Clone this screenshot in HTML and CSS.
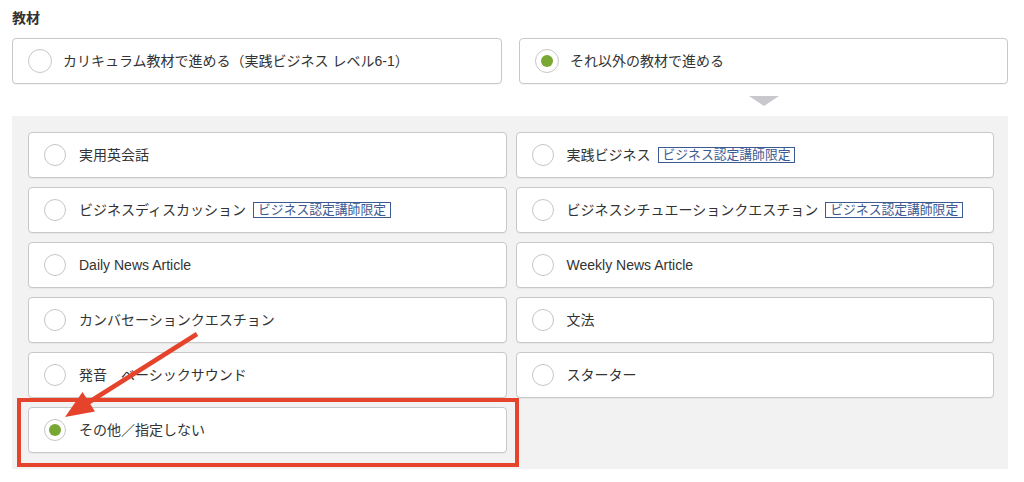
FILE: index.html
```html
<!DOCTYPE html>
<html lang="ja">
<head>
<meta charset="utf-8">
<title>教材</title>
<link rel="stylesheet" href="styles.css">
</head>
<body>
<div class="page">
  <h2 class="label">教材</h2>
  <div class="choice-row">
    <label class="card top"><span class="radio"></span><span class="text">カリキュラム教材で進める（実践ビジネス レベル6-1）</span></label>
    <label class="card top"><span class="radio checked"></span><span class="text">それ以外の教材で進める</span></label>
  </div>
  <div class="pointer-row"><span></span><span class="tri"></span></div>
  <div class="panel">
    <label class="card"><span class="radio"></span><span class="text">実用英会話</span></label>
    <label class="card"><span class="radio"></span><span class="text">実践ビジネス</span><span class="badge">ビジネス認定講師限定</span></label>
    <label class="card"><span class="radio"></span><span class="text">ビジネスディスカッション</span><span class="badge">ビジネス認定講師限定</span></label>
    <label class="card"><span class="radio"></span><span class="text">ビジネスシチュエーションクエスチョン</span><span class="badge">ビジネス認定講師限定</span></label>
    <label class="card"><span class="radio"></span><span class="text">Daily News Article</span></label>
    <label class="card"><span class="radio"></span><span class="text">Weekly News Article</span></label>
    <label class="card"><span class="radio"></span><span class="text">カンバセーションクエスチョン</span></label>
    <label class="card"><span class="radio"></span><span class="text">文法</span></label>
    <label class="card"><span class="radio"></span><span class="text">発音　ベーシックサウンド</span></label>
    <label class="card"><span class="radio"></span><span class="text">スターター</span></label>
    <div class="hl-cell">
      <label class="card"><span class="radio checked"></span><span class="text">その他／指定しない</span></label>
      <span class="annot-box"></span>
    </div>
  </div>
  <svg class="annot-arrow" width="1024" height="482" viewBox="0 0 1024 482" aria-hidden="true">
    <line x1="197" y1="334" x2="86" y2="404" stroke="#e5432b" stroke-width="4.5"/>
    <polygon points="65,417 95,411.5 82.5,392" fill="#e5432b"/>
  </svg>
</div>
</body>
</html>
```

FILE: styles.css
```css
* { box-sizing: border-box; }
html, body { margin: 0; padding: 0; background: #fff; }
body {
  font-family: "Liberation Sans", "Noto Sans CJK JP", sans-serif;
  font-size: 14px;
  color: #333;
  text-spacing-trim: space-all;
}
.page {
  position: relative;
  width: 1024px;
  height: 482px;
  padding: 8px 16px 0 12px;
  overflow: hidden;
}
.label {
  margin: 0 0 10px;
  font-size: 14px;
  line-height: 20px;
  font-weight: bold;
  color: #333;
}
.choice-row {
  display: grid;
  grid-template-columns: 490px 1fr;
  gap: 17px;
}
.pointer-row {
  display: grid;
  grid-template-columns: 490px 1fr;
  gap: 17px;
  margin-top: 12px;
  height: 10px;
  margin-bottom: 10px;
}
.tri {
  justify-self: center;
  width: 0;
  height: 0;
  border-left: 15.5px solid transparent;
  border-right: 15.5px solid transparent;
  border-top: 10px solid #c9c9cd;
}
.card {
  display: flex;
  align-items: center;
  height: 46px;
  background: #fff;
  border: 1px solid #c8c8c8;
  border-radius: 4px;
  padding-left: 15px;
  box-shadow: 0 1px 0 rgba(0,0,0,0.04);
}
.radio {
  flex: none;
  width: 22px;
  height: 22px;
  border: 1px solid #c6c6c6;
  border-radius: 50%;
  background: #fff;
  margin-right: 13px;
  display: flex;
  align-items: center;
  justify-content: center;
}
.card.top .radio {
  width: 24px;
  height: 24px;
  margin-right: 11px;
}
.radio.checked::after {
  content: "";
  width: 12px;
  height: 12px;
  border-radius: 50%;
  background: #78a733;
}
.text { white-space: nowrap; line-height: 20px; }
.badge {
  margin-left: 7px;
  font-size: 12.8px;
  line-height: 14px;
  padding: 0 4px;
  border: 1px solid #3b5a92;
  color: #3b5a92;
  white-space: nowrap;
}
.panel {
  display: grid;
  grid-template-columns: 1fr 1fr;
  column-gap: 9px;
  row-gap: 9px;
  background: #f2f2f2;
  padding: 16px 14px 16px 16px;
}
.hl-cell { position: relative; }
.annot-box {
  position: absolute;
  top: -9px;
  left: -11px;
  right: -12px;
  bottom: -14px;
  border: 4px solid #e5432b;
}
.annot-arrow {
  position: absolute;
  top: 0;
  left: 0;
  pointer-events: none;
}
```
